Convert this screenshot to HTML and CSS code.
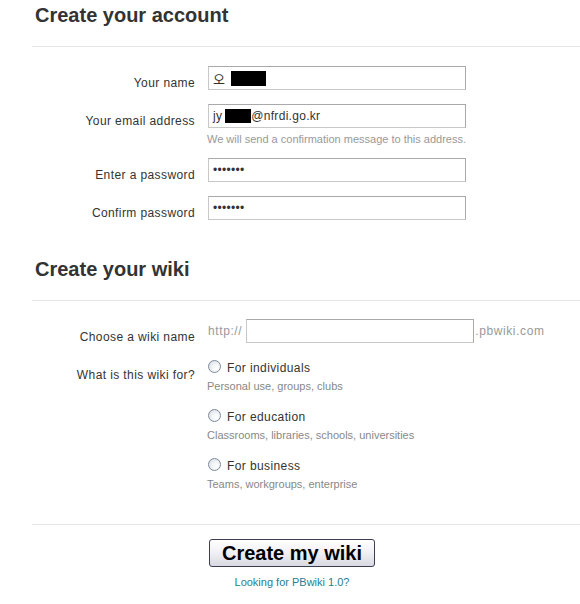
FILE: index.html
```html
<!DOCTYPE html>
<html lang="en">
<head>
    <meta charset="UTF-8">
    <meta name="viewport" content="width=device-width, initial-scale=1.0">
    <title>Create your wiki</title>
    <link rel="stylesheet" href="styles.css">
</head>
<body>

<div class="page">
    <div class="section">
        <h2 class="section-title">Create your account</h2>
        <div class="rows">
            <div class="row">
                <label class="label">Your name</label>
                <div class="field">
                    <div class="textbox"><span class="ko">오</span><span class="redact name-redact"></span></div>
                </div>
            </div>
            <div class="row">
                <label class="label">Your email address</label>
                <div class="field">
                    <div class="textbox">jy<span class="redact mail-redact"></span>@nfrdi.go.kr</div>
                    <div class="hint">We will send a confirmation message to this address.</div>
                </div>
            </div>
            <div class="row">
                <label class="label">Enter a password</label>
                <div class="field">
                    <input class="textbox" type="password" value="1234567">
                </div>
            </div>
            <div class="row">
                <label class="label">Confirm password</label>
                <div class="field">
                    <input class="textbox" type="password" value="1234567">
                </div>
            </div>
        </div>
    </div>

    <div class="section wiki">
        <h2 class="section-title">Create your wiki</h2>
        <div class="rows wiki-rows">
            <div class="row row-url">
                <label class="label label-url">Choose a wiki name</label>
                <div class="field url">
                    <span class="muted">http://</span>
                    <input class="textbox wikiname" type="text">
                    <span class="muted">.pbwiki.com</span>
                </div>
            </div>
            <div class="row">
                <label class="label label-radio">What is this wiki for?</label>
                <div class="field">
                    <div class="option">
                        <label class="option-title"><input type="radio" name="purpose"> For individuals</label>
                        <div class="option-sub">Personal use, groups, clubs</div>
                    </div>
                    <div class="option">
                        <label class="option-title"><input type="radio" name="purpose"> For education</label>
                        <div class="option-sub">Classrooms, libraries, schools, universities</div>
                    </div>
                    <div class="option">
                        <label class="option-title"><input type="radio" name="purpose"> For business</label>
                        <div class="option-sub">Teams, workgroups, enterprise</div>
                    </div>
                </div>
            </div>
        </div>
    </div>

    <div class="actions">
        <div class="submit-group">
            <button class="btn-create">Create my wiki</button>
            <a class="old-link" href="#">Looking for PBwiki 1.0?</a>
        </div>
    </div>
</div>

</body>
</html>
```

FILE: styles.css
```css
body {
    margin: 0;
    font-family: "Liberation Sans", Arial, sans-serif;
    color: #333;
    background: #fff;
}
.page {
    padding-left: 32px;
}
.section-title {
    margin: 0;
    padding: 3px 0 19px 3px;
    font-size: 20px;
    line-height: 24px;
    font-weight: bold;
    color: #333;
    border-bottom: 1px solid #e6e6e6;
}
.wiki {
    margin-top: 34px;
}
.rows {
    padding-top: 19px;
}
.wiki-rows {
    padding-top: 17px;
}
.row {
    display: grid;
    grid-template-columns: 163px 1fr;
    column-gap: 13px;
    margin-bottom: 14px;
}
.row-url {
    margin-bottom: 16px;
}
.label {
    font-size: 12px;
    letter-spacing: 0.4px;
    line-height: 14px;
    text-align: right;
    padding-top: 10px;
    color: #333;
}
.label-url {
    padding-top: 12px;
}
.label-radio {
    padding-top: 8px;
}
.textbox {
    box-sizing: border-box;
    display: flex;
    align-items: center;
    width: 258px;
    height: 24px;
    margin: 0;
    padding: 0 4px;
    border: 1px solid #a9a9a9;
    border-bottom-color: #c8c8c8;
    border-left-color: #c8c8c8;
    font-family: "Liberation Sans", Arial, sans-serif;
    font-size: 12px;
    letter-spacing: 0.3px;
    color: #333;
    background: #fff;
}
.ko {
    font-family: "Noto Sans CJK KR", sans-serif;
    font-size: 13px;
}
.redact {
    display: inline-block;
    background: #000;
}
.name-redact {
    width: 35px;
    height: 15px;
    margin-left: 6px;
}
.mail-redact {
    width: 26px;
    height: 14px;
    margin-left: 3px;
}
.hint {
    margin: 5px 0 -1px -1px;
    font-size: 11px;
    line-height: 12px;
    color: #999;
}
.url {
    display: flex;
    align-items: center;
}
.muted {
    font-size: 12px;
    letter-spacing: 0.6px;
    color: #999;
}
.wikiname {
    width: 228px;
    margin: 0 1px 0 4px;
}
.option {
    margin-bottom: 16px;
}
.option:last-child {
    margin-bottom: 0;
}
.option-title {
    display: flex;
    align-items: center;
    font-size: 12px;
    letter-spacing: 0.4px;
    line-height: 16px;
    color: #333;
}
.option-title input {
    appearance: none;
    width: 13px;
    height: 13px;
    margin: -4px 6px 0 0;
    border: 1px solid #7d8a97;
    border-radius: 50%;
    background: radial-gradient(circle at 65% 65%, #fff 0, #f4f6f8 35%, #d3d9e0 100%);
}
.option-sub {
    margin-top: 3px;
    margin-left: -1px;
    font-size: 11px;
    line-height: 14px;
    color: #888;
}
.actions {
    margin-top: 33px;
    padding-top: 14px;
    padding-left: 177px;
    border-top: 1px solid #e6e6e6;
}
.submit-group {
    display: inline-flex;
    flex-direction: column;
    align-items: center;
}
.btn-create {
    box-sizing: border-box;
    width: 166px;
    height: 28px;
    padding: 0;
    border: 1px solid #3c3c55;
    border-radius: 3px;
    background: linear-gradient(#ffffff, #f2f2f6 45%, #d8d9e2);
    font-family: "Liberation Sans", Arial, sans-serif;
    font-size: 20px;
    font-weight: bold;
    color: #000;
    cursor: pointer;
}
.old-link {
    margin-top: 8px;
    font-size: 11px;
    line-height: 14px;
    color: #2a7d8e;
    text-decoration: none;
}
```
